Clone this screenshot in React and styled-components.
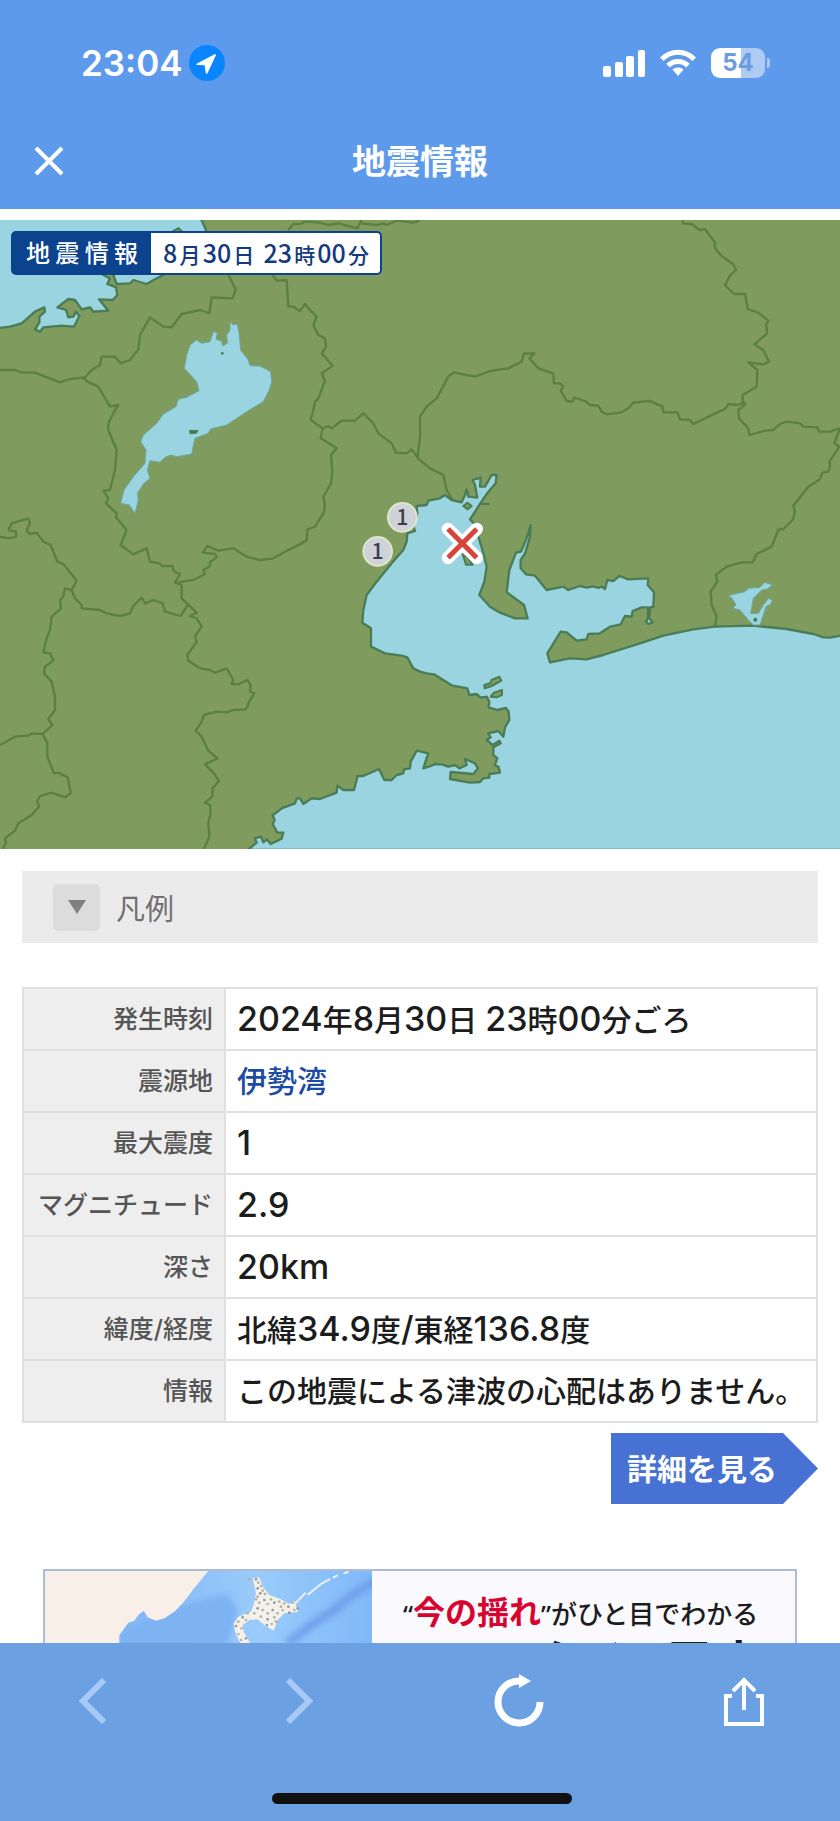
import React, { useState } from "react";
import styled, { createGlobalStyle } from "styled-components";

const rows = [
  { label: "発生時刻", value: "2024年8月30日 23時00分ごろ" },
  { label: "震源地", value: "伊勢湾", href: "#isewan" },
  { label: "最大震度", value: "1" },
  { label: "マグニチュード", value: "2.9" },
  { label: "深さ", value: "20km" },
  { label: "緯度/経度", value: "北緯34.9度/東経136.8度" },
  { label: "情報", value: "この地震による津波の心配はありません。" },
];

// latin runs are set a little larger than the kanji around them
const renderValue = (text) =>
  text
    .split(/([0-9a-z./]+)/)
    .filter(Boolean)
    .map((part, i) => (/[0-9a-z./]/.test(part) ? <Latin key={i}>{part}</Latin> : part));

const SignalIcon = () => (
  <svg width="42" height="27" viewBox="0 0 42 27" fill="#fff">
    <rect x="0" y="16" width="8" height="11" rx="2" />
    <rect x="12" y="12" width="8" height="15" rx="2" />
    <rect x="23" y="6" width="8" height="21" rx="2" />
    <rect x="35" y="0" width="7" height="27" rx="2" />
  </svg>
);

const WifiIcon = () => (
  <svg width="36" height="28" viewBox="0 0 36 28" fill="none" stroke="#fff" strokeWidth="5">
    <path d="M1.8 10.2C11 1 25 1 34.2 10.2" />
    <path d="M8 16.6C13.7 11 22.3 11 28 16.6" />
    <path d="M18 18.4c-2.2 0-4.3.8-5.6 2.2L18 27l5.6-6.4c-1.3-1.4-3.4-2.2-5.6-2.2z" fill="#fff" stroke="none" />
  </svg>
);

const LocationIcon = () => (
  <svg width="36" height="36" viewBox="0 0 36 36">
    <circle cx="18" cy="18" r="18" fill="#0a84ff" />
    <path d="M25.6 9.2 8 18.4c-1 .6-.7 1.600.4 1.700l7.200.2 1.200 7.600c.2 1.100 1.400 1.200 1.800.1L26.800 10.400c.3-.8-.4-1.600-1.200-1.200z" fill="#fff" />
  </svg>
);

const QuakeMap = () => (
  <MapSvg viewBox="0 0 2520 1887" role="img" aria-label="震度分布図">
    <rect width="2520" height="1887" fill="#7f9b5e" />
    <g fill="none" stroke="#5b8040" strokeWidth="7" strokeLinejoin="round">
      <g transform="translate(0 -30)">
        <path d="M865 60 880 42 900 42 915 35 960 38 985 45 1015 40 1072 55 1085 30M1085 40 1130 45 1150 40 1160 45 1190 32 1240 38 1260 32" />
        <path d="M685 195 707 238 698 265 635 262 628 310 600 300 545 312 515 352 490 350 450 322 420 375 415 418 390 450 362 460 345 440 305 440 300 465 275 480 250 508" />
        <path d="M0 480 45 480 65 487 105 488 180 517 210 507 250 503 262 515 295 530 330 590 355 585 345 600 325 640 325 660 350 720 345 780 330 840 310 843 325 865 318 880 350 910 348 922 380 960" />
        <path d="M818 195 830 212 860 210 865 290 880 290 900 303 915 282 930 300 950 320 940 345 955 375 975 385 978 410 965 430 998 467 965 490 975 512 955 565 945 575 940 600 932 630 968 655 962 685 1010 715 993 735 997 785 993 820 970 860 975 890 970 910 945 950 918 960" />
        <path d="M968 655 985 648 995 655 1025 632 1065 632 1090 610 1120 640 1135 670 1175 700 1188 728 1220 730 1235 718 1258 750" />
        <path d="M25 960 35 940 85 925 90 940 80 960" />
      </g>
      <g transform="translate(1260 -30)">
        <path d="M-8 745 0 680 0 620 20 590 50 565 85 500 100 487 165 500 210 483 265 475 305 455 312 430 343 430 328 445 355 475 400 490 402 520 420 520 430 530 422 542 440 573 458 575 462 563 495 573 510 585 535 587 545 605 560 613 600 608 625 595 640 578 690 573 728 590 730 607 772 607 780 628 810 630 820 642 880 613 915 597 925 582 950 585 968 580 968 555 1010 530 1012 480 985 457 1030 463 1047 455 1030 420 1003 403 1042 370 1038 345 1045 332 1015 308 983 297 975 252 942 252 915 225 930 197 948 180 940 163 905 138 885 115 885 98 855 57 838 60 815 42 790 40 787 30" />
        <path d="M968 575 977 582 955 600 957 625 985 655 988 675 1035 662 1060 660 1080 642 1100 635 1140 640 1150 650 1192 652 1197 665 1230 665 1260 655 1243 700 1258 710 1228 755 1230 770 1225 785 1207 788 1200 808 1165 830 1120 887 1125 905 1118 930 1090 957 1070 960" />
        <path d="M0 750 30 775 70 795 80 840 100 873" />
      </g>
      <g transform="translate(0 930)">
        <path d="M380 0 362 45 400 73 440 55 450 95 480 100 485 108 518 108 522 125 540 132 525 158 545 165 545 205 590 248 570 258 590 265 605 290 585 318 590 335 562 375 565 392 600 415 630 420 645 428 680 415 700 450 695 462 715 463 742 450 752 465 750 485 763 490 750 510 738 538 700 540 680 547 650 545 612 555 605 575 587 602 605 620 625 662 653 685 615 703 640 728 657 753 638 775 637 800 615 818 630 825 632 850 625 880 628 920 612 957" />
        <path d="M922 0 920 30 905 40 855 65 820 85 780 90 740 80 700 55 655 62 622 48 608 68 645 72 650 82 632 95 628 110 610 120 615 132 585 148 535 157" />
        <path d="M80 0 88 12 110 8 130 35 152 45 172 95 190 102 230 152 215 180 225 205 245 225 245 235 300 240 320 250 360 258 390 250 400 228 425 203 435 220 460 210 488 220 495 245 542 258 565 222" />
        <path d="M215 180 195 175 190 200 180 210 183 235 155 260 150 300 140 325 130 367 150 370 160 392 135 410 132 430 155 455 165 500 165 540 145 567 157 585 128 612 95 610 85 617 45 620 0 645" />
        <path d="M128 612 142 640 142 680 162 730 175 728 203 742 212 790 195 802 155 788 120 798 112 812 117 830 95 855 55 880 45 902 15 925 18 940 8 957" />
        <path d="M0 20 25 25 48 20 48 5 25 0" />
      </g>
      <path d="M2335 930 2315 980 2270 1002 2258 1027 2225 1027 2180 1040 2147 1065 2152 1085 2132 1115 2135 1155 2150 1190 2145 1218" />
    </g>
    <g fill="#9ad4e1" stroke="#4a7d55" strokeWidth="7" strokeLinejoin="round">
      <path d="M-10-10 600-10 618 30 600 70 490 165 470 175 440 192 400 180 390 190 350 192 340 165 325 120 310 165 330 175 322 192 348 202 352 225 338 240 297 238 325 272 280 275 270 262 245 268 225 240 205 237 172 262 198 270 205 292 220 290 228 275 238 288 222 320 185 317 130 322 120 335 105 328 118 308 118 290 135 275 133 262 105 275 65 310 30 320-10 325z" />
      <path d="M743 1890 770 1868 765 1855 783 1850 790 1867 800 1858 812 1872 845 1856 850 1838 832 1838 818 1812 824 1800 818 1786 845 1765 885 1750 890 1735 900 1735 910 1752 935 1735 960 1737 1010 1718 1012 1697 1030 1710 1062 1710 1073 1668 1090 1668 1137 1647 1153 1680 1175 1680 1190 1665 1210 1660 1212 1648 1230 1645 1232 1625 1250 1592 1285 1600 1278 1620 1270 1645 1295 1637 1305 1632 1325 1633 1345 1640 1365 1635 1378 1645 1400 1635 1395 1617 1425 1630 1434 1645 1420 1662 1352 1656 1350 1677 1410 1688 1440 1686 1450 1675 1468 1673 1468 1662 1500 1658 1495 1640 1484 1636 1492 1615 1480 1605 1480 1582 1502 1570 1498 1562 1478 1575 1460 1560 1472 1552 1465 1540 1495 1533 1510 1550 1515 1522 1528 1500 1526 1475 1518 1464 1492 1470 1466 1462 1468 1445 1460 1430 1442 1433 1430 1422 1408 1425 1402 1405 1355 1396 1302 1363 1280 1360 1260 1355 1240 1345 1222 1312 1205 1307 1155 1300 1113 1280 1113 1225 1087 1208 1090 1170 1100 1125 1130 1085 1175 1030 1210 990 1220 965 1222 940 1245 933 1240 920 1252 880 1250 858 1280 855 1285 842 1320 835 1335 825 1355 840 1385 847 1395 825 1400 808 1405 830 1432 833 1425 795 1418 780 1442 773 1440 800 1455 800 1475 765 1490 765 1487 790 1465 815 1440 852 1410 898 1425 915 1450 1000 1460 1040 1453 1085 1438 1125 1470 1160 1500 1178 1545 1195 1583 1195 1572 1155 1520 1117 1528 1050 1548 998 1563 995 1582 950 1592 915 1590 950 1575 1000 1562 1020 1562 1045 1578 1063 1605 1067 1640 1110 1690 1100 1705 1110 1740 1098 1760 1103 1780 1099 1795 1104 1805 1100 1815 1107 1822 1080 1840 1083 1858 1068 1885 1078 1945 1075 1943 1095 1962 1117 1960 1160 1950 1162 1948 1195 1958 1207 1945 1212 1938 1205 1944 1195 1944 1162 1925 1162 1898 1173 1895 1190 1875 1188 1862 1213 1830 1220 1800 1240 1765 1242 1760 1258 1730 1262 1700 1237 1682 1235 1642 1300 1650 1327 1710 1315 1760 1318 1810 1305 1920 1270 1990 1247 2080 1228 2145 1220 2260 1217 2360 1227 2440 1242 2470 1252 2490 1253 2530 1246 2530 1890z" />
    </g>
    <g fill="#9ad4e1" stroke="#6da89a" strokeWidth="3" strokeLinejoin="round">
      <path d="M690 305 700 315 712 312 718 345 722 390 745 420 750 437 780 438 812 455 815 485 808 510 790 545 740 575 680 615 632 627 625 640 585 655 578 685 575 702 530 710 512 705 495 712 480 727 450 722 442 750 450 775 430 792 412 820 415 840 405 880 388 855 362 850 372 810 400 770 435 730 438 690 422 665 430 645 470 610 490 582 528 560 535 538 560 532 597 512 590 485 553 445 560 405 570 375 590 360 605 370 630 365 640 335 652 338 648 358 665 363 668 377 682 370 680 345 690 330z" />
      <path d="M2182 1128 2200 1123 2235 1115 2245 1105 2280 1102 2295 1087 2317 1095 2300 1108 2285 1110 2260 1135 2252 1180 2275 1180 2290 1155 2305 1135 2317 1140 2312 1152 2298 1160 2280 1215 2260 1215 2245 1200 2220 1170 2198 1165 2208 1155 2195 1133z" />
    </g>
    <g fill="#7f9b5e" stroke="#4a7d55" strokeWidth="6" strokeLinejoin="round">
      <path d="M1390 858 1402 848 1415 858 1403 868z" />
      <path d="M1388 1002 1398 1034 1418 1034 1403 1012z" />
      <path d="M1453 1395 1470 1390 1475 1380 1498 1370 1504 1382 1475 1398 1454 1405z" />
      <path d="M1472 1430 1482 1418 1506 1410 1506 1425 1490 1432z" />
      <path d="M570 633 592 633 588 638 572 640z" />
      <path d="M512 38 535 24 550 38z" />
      <path d="M1444 852h24" />
    </g>
    <circle cx="667" cy="400" r="4" fill="#4a7d55" />
    <circle cx="2266" cy="1199" r="6" fill="#4a7d55" />
    <g fill="#cfd2d9" stroke="#dbe6cc" strokeWidth="6">
      <circle cx="1207" cy="892" r="43" />
      <circle cx="1133" cy="994" r="43" />
    </g>
    <MarkerText x="1207" y="915">1</MarkerText>
    <MarkerText x="1133" y="1017">1</MarkerText>
    <g fill="none">
      <path d="M1344 927 1430 1013M1430 927 1344 1013" stroke="#fff" strokeWidth="38" strokeLinecap="round" />
      <path d="M1344 927 1430 1013M1430 927 1344 1013" stroke="#d8443a" strokeWidth="15" />
    </g>
  </MapSvg>
);

const dots = [
  [765, 58], [772, 68], [780, 78], [770, 85], [785, 92], [792, 102], [778, 100], [765, 118], [775, 128],
  [790, 120], [800, 132], [810, 118], [820, 128], [835, 125], [850, 130], [862, 140], [875, 128], [880, 150],
  [865, 158], [845, 150], [830, 160], [815, 150], [800, 160], [785, 150], [770, 145], [760, 160], [780, 170],
  [800, 178], [820, 172], [812, 192], [798, 195], [840, 140], [740, 160], [725, 172], [712, 185], [735, 180],
  [705, 198], [722, 205], [712, 222], [735, 235], [720, 240], [745, 58], [890, 145], [770, 110], [825, 185],
];

const BannerMap = () => (
  <BannerSvg viewBox="132 33 981 560" role="img" aria-label="日本地図">
    <defs>
      <linearGradient id="sea" x1="0" y1="0" x2="1" y2="0">
        <stop offset="30%" stopColor="#85b8f6" />
        <stop offset="65%" stopColor="#9acbfb" />
        <stop offset="100%" stopColor="#7fb9f8" />
      </linearGradient>
      <filter id="soft">
        <feGaussianBlur stdDeviation="9" />
      </filter>
    </defs>
    <rect x="132" y="33" width="981" height="560" fill="url(#sea)" />
    <path d="M350 260 370 210 560 130 680 100 710 150 680 260z" fill="#7db2f3" filter="url(#soft)" />
    <path d="M860 250 930 195 1000 150 1060 100 1130 60" fill="none" stroke="#719fec" strokeWidth="26" filter="url(#soft)" />
    <path d="M132 33H622L600 60 575 90 560 110 545 130 520 155 490 175 465 182 440 172 428 152 412 165 400 182 382 188 370 205 355 225 355 260 340 593H132z" fill="#f8f0e8" />
    <path d="M755 55 775 52 785 80 805 105 840 118 865 132 880 122 892 155 850 160 830 180 818 212 790 195 770 178 745 180 725 195 728 215 740 235 750 255 720 255 702 215 698 190 712 170 750 155 758 135 765 100z" fill="#f4f0ea" />
    <path d="M885 128 912 100M922 103 960 72 985 58M998 52 1008 47M1030 40 1040 36" fill="none" stroke="#eef3f8" strokeWidth="6" strokeLinecap="round" />
    {dots.map(([x, y], i) => (
      <circle key={i} cx={x} cy={y} r="4" fill={i % 3 ? "#b5b1a0" : "#8f98a0"} />
    ))}
  </BannerSvg>
);

const App = () => {
  const [legendOpen, setLegendOpen] = useState(false);

  return (
    <Screen>
      <GlobalStyle />
      <Header>
        <StatusBar>
          <Clock>
            23:04
            <LocationIcon />
          </Clock>
          <StatusIcons>
            <SignalIcon />
            <WifiIcon />
            <BatteryWrap>
              <Battery>54</Battery>
              <BatteryTip />
            </BatteryWrap>
          </StatusIcons>
        </StatusBar>
        <TitleBar>
          <IconButton aria-label="閉じる">
            <svg width="30" height="30" viewBox="0 0 30 30" stroke="#fff" strokeWidth="4">
              <path d="M2 2 28 28M28 2 2 28" />
            </svg>
          </IconButton>
          <Title>地震情報</Title>
        </TitleBar>
      </Header>

      <Main>
        <MapBox>
          <QuakeMap />
          <MapTag>
            <TagTitle>地震情報</TagTitle>
            <TagDate>
              <b>8</b>月<b>30</b>日 <b>23</b>時<b>00</b>分
            </TagDate>
          </MapTag>
        </MapBox>

        <Content>
          <Legend
            type="button"
            aria-expanded={legendOpen}
            onClick={() => setLegendOpen((prev) => !prev)}
          >
            <LegendMark>
              <svg width="18" height="14" viewBox="0 0 18 14" fill="#808080">
                <path d="M0 0h18L9 14z" />
              </svg>
            </LegendMark>
            凡例
          </Legend>

          <InfoTable>
            <tbody>
              {rows.map(({ label, value, href }) => (
                <tr key={label}>
                  <Label scope="row">{label}</Label>
                  <Value>{href ? <PlaceLink href={href}>{value}</PlaceLink> : renderValue(value)}</Value>
                </tr>
              ))}
            </tbody>
          </InfoTable>

          <DetailLink href="#detail">詳細を見る</DetailLink>

          <Banner href="#realtime">
            <BannerMap />
            <BannerText>
              <BannerLead>
                “<em>今の揺れ</em>”がひと目でわかる
              </BannerLead>
              <BannerName>リアルタイム震度</BannerName>
            </BannerText>
          </Banner>
        </Content>
      </Main>

      <Toolbar>
        <ToolbarButtons>
          <IconButton aria-label="戻る" disabled>
            <svg width="27" height="46" viewBox="0 0 27 46" fill="none" stroke="#a6c9f6" strokeWidth="6">
              <path d="M25 2 4 23 25 44" />
            </svg>
          </IconButton>
          <IconButton aria-label="進む" disabled>
            <svg width="27" height="46" viewBox="0 0 27 46" fill="none" stroke="#a6c9f6" strokeWidth="6">
              <path d="M2 2 23 23 2 44" />
            </svg>
          </IconButton>
          <IconButton aria-label="再読み込み">
            <svg width="50" height="54" viewBox="0 0 50 54">
              <path d="M26 7A21 21 0 1 0 46 28" fill="none" stroke="#fff" strokeWidth="7" />
              <path d="M25 0 37 7 25 14z" fill="#fff" />
            </svg>
          </IconButton>
          <IconButton aria-label="共有">
            <svg width="40" height="50" viewBox="0 0 40 50" fill="none" stroke="#fff" strokeWidth="4">
              <path d="M8 20H2V48H38V20H32" />
              <path d="M20 34V4M9 15 20 4 31 15" />
            </svg>
          </IconButton>
        </ToolbarButtons>
        <HomeIndicator />
      </Toolbar>
    </Screen>
  );
};

export default App;

const GlobalStyle = createGlobalStyle`
  * {
    box-sizing: border-box;
  }
  body {
    margin: 0;
    background: #fff;
    font-family: Inter, "Noto Sans CJK JP", sans-serif;
  }
  svg {
    display: block;
    flex-shrink: 0;
  }
`;

const Screen = styled.div`
  display: flex;
  flex-direction: column;
  height: 100vh;
`;

const Header = styled.header`
  flex-shrink: 0;
  background: #5e9aeb;
  color: #fff;
  padding-bottom: 14px;
`;

const StatusBar = styled.div`
  display: flex;
  align-items: center;
  justify-content: space-between;
  height: 126px;
  padding: 0 70px 0 81px;
`;

const Clock = styled.div`
  display: flex;
  align-items: center;
  gap: 6px;
  font-size: 35px;
  font-weight: 600;
`;

const StatusIcons = styled.div`
  display: flex;
  align-items: center;
  gap: 15px;
`;

const BatteryWrap = styled.div`
  display: flex;
  align-items: center;
  gap: 2px;
`;

const Battery = styled.div`
  width: 54px;
  height: 30px;
  border-radius: 9px;
  background: linear-gradient(90deg, #fff 55%, #b0cbf3 55%);
  color: #6c9ce0;
  font-size: 24px;
  font-weight: 700;
  line-height: 30px;
  text-align: center;
`;

const BatteryTip = styled.div`
  width: 3px;
  height: 10px;
  border-radius: 0 3px 3px 0;
  background: #b0cbf3;
`;

const TitleBar = styled.div`
  display: grid;
  grid-template-columns: 30px 1fr 30px;
  align-items: center;
  height: 69px;
  padding: 0 34px;
`;

const Title = styled.h1`
  margin: 0;
  padding-top: 2px;
  font-size: 34px;
  font-weight: 700;
  line-height: 40px;
  text-align: center;
`;

const IconButton = styled.button`
  display: flex;
  padding: 0;
  border: 0;
  background: none;
  cursor: pointer;
  &:disabled {
    cursor: default;
  }
`;

const Main = styled.main`
  flex: 1;
  min-height: 0;
  overflow: hidden;
  padding-top: 11px;
`;

const MapBox = styled.div`
  position: relative;
`;

const MapSvg = styled.svg`
  width: 100%;
  height: auto;
`;

const MarkerText = styled.text`
  fill: #3c3f4c;
  font-family: "Noto Sans CJK JP", sans-serif;
  font-size: 64px;
  font-weight: 500;
  text-anchor: middle;
`;

const MapTag = styled.div`
  position: absolute;
  top: 11px;
  left: 11px;
  display: flex;
  border: 2px solid #0b438e;
  border-radius: 5px;
  background: #0b438e;
  font-family: "Noto Sans CJK JP", sans-serif;
  line-height: 38px;
`;

const TagTitle = styled.span`
  width: 138px;
  padding: 0 13px;
  color: #fff;
  font-size: 24px;
  font-weight: 500;
  text-align: justify;
  text-align-last: justify;
`;

const TagDate = styled.span`
  width: 229px;
  padding: 0 11px 0 12px;
  border-radius: 0 3px 3px 0;
  background: #fff;
  color: #14397f;
  font-size: 21px;
  font-weight: 500;
  text-align: justify;
  text-align-last: justify;
  b {
    font-size: 25px;
    font-weight: 500;
  }
`;

const Content = styled.div`
  padding: 22px 22px 0;
`;

const Legend = styled.button`
  display: flex;
  align-items: center;
  gap: 16px;
  width: 100%;
  height: 72px;
  padding: 0 31px;
  border: 0;
  background: #ebebeb;
  color: #707070;
  font-family: inherit;
  font-size: 29px;
  cursor: pointer;
`;

const LegendMark = styled.span`
  display: flex;
  align-items: center;
  justify-content: center;
  width: 47px;
  height: 47px;
  border-radius: 5px;
  background: #dcdcdc;
`;

const InfoTable = styled.table`
  width: 100%;
  margin-top: 44px;
  border-collapse: collapse;
  th,
  td {
    height: 62px;
    border: 2px solid #e0e0e0;
    line-height: 40px;
    white-space: nowrap;
  }
`;

const Label = styled.th`
  width: 202px;
  padding: 0 11px;
  background: #eee;
  color: #555;
  font-size: 25px;
  font-weight: 500;
  text-align: right;
`;

const Value = styled.td`
  padding: 0 0 0 11px;
  color: #1c1c1c;
  font-size: 30px;
  font-weight: 500;
`;

const Latin = styled.span`
  font-size: 34px;
`;

const PlaceLink = styled.a`
  color: #1d4ba3;
  text-decoration: none;
`;

const DetailLink = styled.a`
  display: block;
  width: 207px;
  height: 71px;
  margin: 10px 0 0 auto;
  padding-left: 16px;
  background: #4771d2;
  clip-path: polygon(0 0, 172px 0, 100% 50%, 172px 100%, 0 100%);
  color: #fff;
  font-size: 30px;
  font-weight: 700;
  line-height: 73px;
  text-decoration: none;
`;

const Banner = styled.a`
  display: flex;
  margin: 65px 21px 0;
  border: 2px solid #aebbd8;
  background: #f9f9fe;
  color: #1c1c1c;
  text-decoration: none;
`;

const BannerSvg = styled.svg`
  width: 327px;
  height: auto;
`;

const BannerText = styled.div`
  padding: 21px 0 0 31px;
  font-family: "Noto Sans", "Noto Sans CJK JP", sans-serif;
  white-space: nowrap;
`;

const BannerLead = styled.div`
  font-size: 26px;
  font-weight: 500;
  line-height: 40px;
  em {
    color: #d8042f;
    font-size: 32px;
    font-style: normal;
    font-weight: 700;
  }
`;

const BannerName = styled.div`
  font-size: 48px;
  font-weight: 700;
  line-height: 58px;
  font-feature-settings: "palt";
`;

const Toolbar = styled.footer`
  display: flex;
  flex-direction: column;
  align-items: center;
  justify-content: space-between;
  flex-shrink: 0;
  height: 178px;
  padding: 31px 76px 17px 79px;
  background: #6ba0e3;
`;

const ToolbarButtons = styled.nav`
  display: flex;
  align-items: center;
  justify-content: space-between;
  width: 100%;
`;

const HomeIndicator = styled.div`
  width: 300px;
  height: 11px;
  border-radius: 6px;
  background: #111;
`;
